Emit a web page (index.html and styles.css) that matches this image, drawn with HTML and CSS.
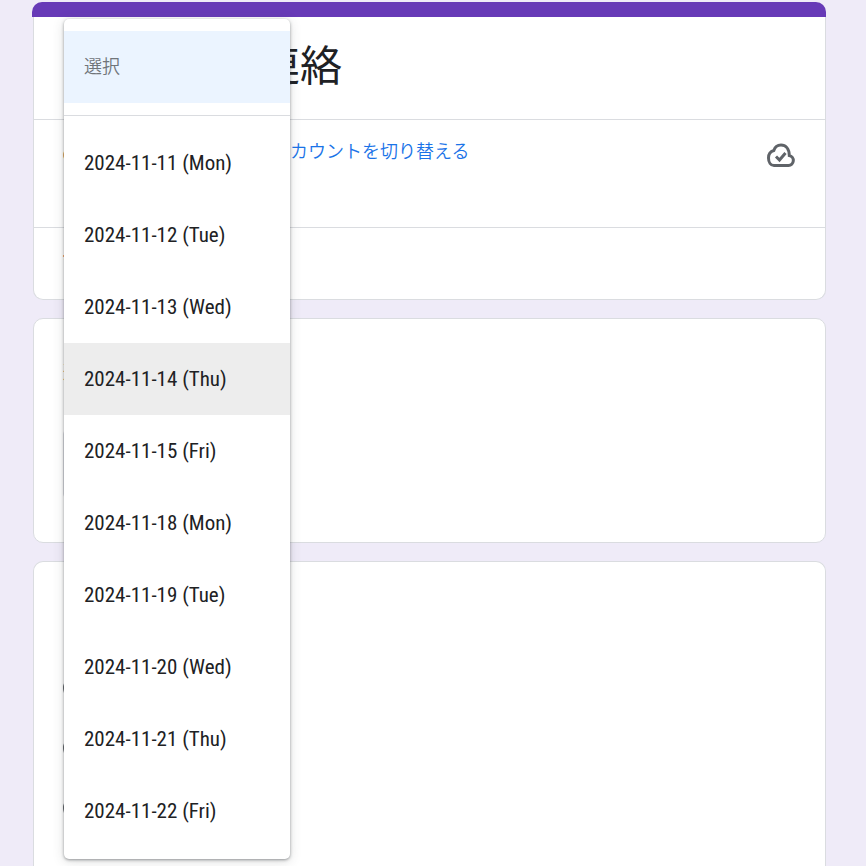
FILE: index.html
```html
<!DOCTYPE html>
<html lang="ja">
<head>
<meta charset="utf-8">
<meta name="viewport" content="width=device-width, initial-scale=1">
<title>連絡</title>
<link rel="stylesheet" href="styles.css">
</head>
<body>
<main class="form">
  <section class="card intro">
    <div class="accent"></div>
    <h1 class="title">連絡</h1>
    <div class="account">
      <b class="user">c</b>
      <a class="switch" href="#">アカウントを切り替える</a>
      <svg class="cloud" viewBox="0 0 28 24" role="img" aria-label="保存済み">
        <path d="M7 22.500h14.500a5 5 0 0 0 .8-9.900C22.200 5.700 18.600 2 14 2 10.600 2 7.900 4 6.800 7.500 3.600 8.400 1.500 11.200 1.500 15c0 4.300 2.300 7.500 5.500 7.500z"/>
        <path d="M9 13.500l3.500 3.500 6-7"/>
      </svg>
    </div>
    <div class="required">*</div>
  </section>

  <section class="card question">
    <label class="label" for="date">選</label>
    <div class="field">
      <select class="select" id="date"><option>選択</option></select>
      <div class="menu" role="listbox" aria-label="選択">
        <button class="item placeholder" role="option" aria-selected="true">選択</button>
        <hr class="divider">
        <button class="item" role="option">2024-11-11 (Mon)</button>
        <button class="item" role="option">2024-11-12 (Tue)</button>
        <button class="item" role="option">2024-11-13 (Wed)</button>
        <button class="item active" role="option">2024-11-14 (Thu)</button>
        <button class="item" role="option">2024-11-15 (Fri)</button>
        <button class="item" role="option">2024-11-18 (Mon)</button>
        <button class="item" role="option">2024-11-19 (Tue)</button>
        <button class="item" role="option">2024-11-20 (Wed)</button>
        <button class="item" role="option">2024-11-21 (Thu)</button>
        <button class="item" role="option">2024-11-22 (Fri)</button>
      </div>
    </div>
  </section>

  <section class="card choices">
    <input class="radio" type="radio" name="choice" aria-label="1">
    <input class="radio" type="radio" name="choice" aria-label="2">
    <input class="radio" type="radio" name="choice" aria-label="3">
  </section>
</main>
</body>
</html>
```
FILE: styles.css
```css
* { box-sizing: border-box; }
html { height: 100%; overflow: hidden; }
body {
  margin: 0;
  height: 100%;
  overflow: hidden;
  background: #efebf8;
  color: #202124;
  font-family: "Roboto Condensed", Roboto, "Noto Sans CJK JP", sans-serif;
  font-size: 18px;
}
.form {
  display: flex;
  flex-direction: column;
  gap: 18px;
  min-height: 100%;
  padding: 2px 40px 0 33px;
}
.card {
  background: #fff;
  border: 1px solid #dadce0;
  border-radius: 10px;
}
.intro { border-top: 0; }
.accent {
  height: 15px;
  margin: 0 -1px 0 -2px;
  background: #673ab7;
  border-radius: 10px 10px 0 0;
}
.title {
  margin: 0;
  padding: 20px 30px 22px 224px;
  font-size: 42px;
  font-weight: 400;
  line-height: 60px;
}
.account {
  display: flex;
  height: 109px;
  padding: 18px 30px 0 29px;
  border-top: 1px solid #dadce0;
  border-bottom: 1px solid #dadce0;
}
.user { width: 209px; line-height: 32px; }
.switch {
  color: #1a73e8;
  font-weight: 350;
  line-height: 28px;
  text-decoration: none;
}
.cloud {
  width: 28px;
  height: 24px;
  margin: 5px 0 0 auto;
  fill: none;
  stroke: #5f6368;
  stroke-width: 3;
}
.required {
  height: 71px;
  padding: 21px 29px;
  color: #d93025;
}
.question {
  height: 225px;
  padding: 40px 30px 0 29px;
}
.label { display: block; width: 20px; height: 71px; line-height: 28px; }
.field { position: relative; width: 226px; }
.select {
  width: 100%;
  height: 68px;
  border: 1px solid #dadce0;
  border-radius: 4px;
  background: #fff;
}
.menu {
  position: absolute;
  top: -411px;
  left: 1px;
  width: 226px;
  padding: 12px 0;
  background: #fff;
  border-radius: 5px;
  box-shadow: 0 1px 3px rgba(60, 64, 67, .5), 0 2px 12px rgba(60, 64, 67, .18);
}
.item {
  display: block;
  width: 100%;
  height: 72px;
  padding: 0 20px;
  border: 0;
  background: #fff;
  color: #202124;
  font: inherit;
  font-size: 21px;
  text-align: left;
  white-space: nowrap;
}
.placeholder {
  padding-bottom: 4px;
  background: #ebf4ff;
  color: #70757a;
  font-size: 18px;
  font-weight: 350;
}
.active { background: #ededed; }
.divider {
  margin: 12px 0 11px;
  border: 0;
  border-top: 1px solid #dadce0;
}
.choices {
  display: flex;
  flex: 1;
  flex-direction: column;
  gap: 36px;
  padding: 114px 29px 0;
  border-bottom: 0;
  border-radius: 10px 10px 0 0;
}
.radio {
  appearance: none;
  width: 24px;
  height: 24px;
  margin: 0;
  border: 2px solid #5f6368;
  border-radius: 50%;
}
```
